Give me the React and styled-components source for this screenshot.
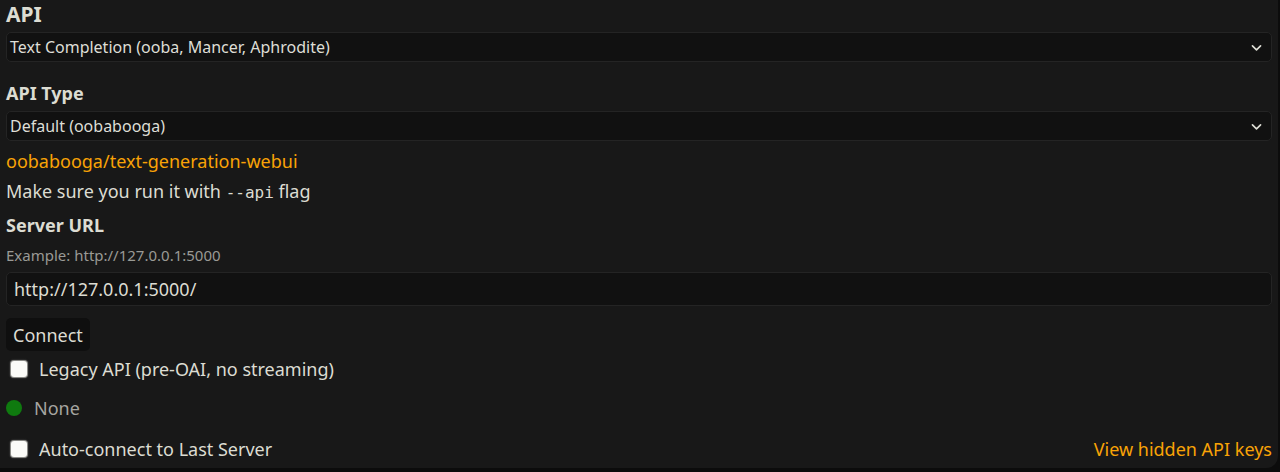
import React from "react"
import styled, { createGlobalStyle } from 'styled-components'

const Global = createGlobalStyle`
  html, body {
    margin: 0;
    padding: 0;
    background: #0c0c0c;
    overflow: hidden;
  }
  body {
    font-family: 'Noto Sans', sans-serif;
    color: rgb(220, 220, 210);
  }
`

const Panel = styled.div`
  width: 1278px;
  height: 480px;
  margin-top: -12px;
  padding: 14px 6px 0 6px;
  box-sizing: border-box;
  background: #181818;
  border-radius: 0 12px 12px 0;
  display: flex;
  flex-direction: column;
`

const Title = styled.h3`
  margin: 0;
  font-size: 21px;
  font-weight: 700;
  line-height: 24px;
`

const SubTitle = styled.h4`
  margin: ${p => p.top || 0}px 0 0 0;
  font-size: 18px;
  font-weight: 700;
  line-height: 24px;
`

const SelectBox = styled.div`
  margin-top: ${p => p.top || 0}px;
  height: 30px;
  width: 1266px;
  box-sizing: border-box;
  background: #111111;
  border: 1px solid #242424;
  border-radius: 5px;
  display: flex;
  align-items: center;
  justify-content: space-between;
  padding: 0 8px 0 3px;
  font-size: 16px;
  color: rgb(222, 222, 214);
  svg {
    width: 13px;
    height: 13px;
  }
`

const Link = styled.a`
  margin-top: 8px;
  color: #f9a306;
  font-size: 18px;
  line-height: 24px;
  text-decoration: none;
`

const Note = styled.div`
  margin-top: 6px;
  font-size: 18px;
  line-height: 24px;
  code {
    font-family: 'DejaVu Sans Mono', monospace;
    font-size: 16px;
  }
`

const Hint = styled.small`
  margin-top: 8px;
  font-size: 15px;
  line-height: 20px;
  color: #9a9a95;
`

const Input = styled.div`
  margin-top: 7px;
  height: 34px;
  width: 1266px;
  box-sizing: border-box;
  background: #111111;
  border: 1px solid #242424;
  border-radius: 5px;
  padding: 0 7px;
  display: flex;
  align-items: center;
  font-size: 18px;
`

const Button = styled.div`
  margin-top: 12px;
  align-self: flex-start;
  height: 33px;
  box-sizing: border-box;
  padding: 0 7px;
  background: #0f0f0f;
  border-radius: 5px;
  display: flex;
  align-items: center;
  font-size: 18px;
`

const Row = styled.label`
  margin-top: ${p => p.top || 0}px;
  display: flex;
  align-items: center;
  justify-content: ${p => (p.spread ? 'space-between' : 'flex-start')};
  font-size: 18px;
  line-height: 24px;
`

const Check = styled.span`
  display: flex;
  align-items: center;
  gap: 12px;
  padding-left: 5px;
`

const Box = styled.span`
  width: 16px;
  height: 16px;
  background: #fbfbf8;
  border-radius: 3px;
  box-shadow: 0 0 0 1px #8a8a86, 0 0 2px 1px #555;
`

const Dot = styled.span`
  width: 16px;
  height: 16px;
  border-radius: 50%;
  background: #0f7a0f;
  margin-right: 12px;
`

const Status = styled.span`
  color: #a5a5a0;
`

const Orange = styled.span`
  color: #f9a306;
`

const Chevron = () => (
  <svg viewBox="0 0 16 16" fill="none" stroke="currentColor" strokeWidth="2" strokeLinecap="round" strokeLinejoin="round">
    <path d="M3 6l5 5 5-5" />
  </svg>
)

export default () => (
  <>
    <Global />
    <Panel>
      <Title>API</Title>
      <SelectBox top={6}>
        <span>Text Completion (ooba, Mancer, Aphrodite)</span>
        <Chevron />
      </SelectBox>
      <SubTitle top={19}>API Type</SubTitle>
      <SelectBox top={6}>
        <span>Default (oobabooga)</span>
        <Chevron />
      </SelectBox>
      <Link>oobabooga/text-generation-webui</Link>
      <Note>Make sure you run it with <code>--api</code> flag</Note>
      <SubTitle top={8}>Server URL</SubTitle>
      <Hint>Example: http://127.0.0.1:5000</Hint>
      <Input>http://127.0.0.1:5000/</Input>
      <Button>Connect</Button>
      <Row top={6}>
        <Check><Box />Legacy API (pre-OAI, no streaming)</Check>
      </Row>
      <Row top={15}>
        <Dot /><Status>None</Status>
      </Row>
      <Row top={17} spread>
        <Check><Box />Auto-connect to Last Server</Check>
        <Orange>View hidden API keys</Orange>
      </Row>
    </Panel>
  </>
)
